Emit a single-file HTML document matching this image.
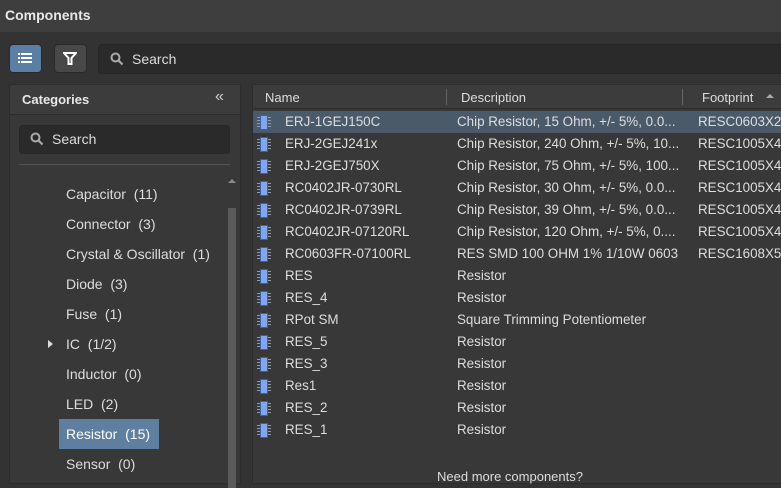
<!DOCTYPE html>
<html><head><style>
*{margin:0;padding:0;box-sizing:border-box}
body{width:781px;height:483px;overflow:hidden;background:#333;font-family:"Liberation Sans",sans-serif;color:#ddd;position:relative;font-size:13px}
.a{position:absolute}
.row{position:absolute;left:0;width:528px;height:22px;line-height:22px;white-space:nowrap}
.row span{position:absolute}
.ic{position:absolute;left:4px;top:4px;width:14px;height:15px}
.cat{position:absolute;left:66px;font-size:14px;color:#ddd;white-space:nowrap}
</style></head><body>
<div class="a" style="left:0;top:0;width:781px;height:32px;background:#3e3e3e"></div>
<div class="a" style="left:5px;top:7px;font-weight:bold;font-size:14px;color:#e8e8e8">Components</div>
<div class="a" style="left:9px;top:44px;width:33px;height:29px;background:#5b7ea5;border:1px solid #2a2a2a;border-radius:4px"></div>
<svg class="a" style="left:18px;top:52px" width="14" height="12"><g fill="#fff"><rect x="0" y="1" width="2" height="2"/><rect x="3" y="1" width="11" height="2"/><rect x="0" y="5" width="2" height="2"/><rect x="3" y="5" width="11" height="2"/><rect x="0" y="9" width="2" height="2"/><rect x="3" y="9" width="11" height="2"/></g></svg>
<div class="a" style="left:54px;top:44px;width:33px;height:29px;background:#484848;border:1px solid #2a2a2a;border-radius:4px"></div>
<svg class="a" style="left:63px;top:51px" width="14" height="15"><path d="M1 2h12l-4.5 5v6h-3v-6z" fill="none" stroke="#fff" stroke-width="2"/></svg>
<div class="a" style="left:98px;top:44px;width:690px;height:30px;background:#2a2a2a;border:1px solid #262626;border-radius:4px"></div>
<svg class="a" style="left:110px;top:52px" width="14" height="14"><circle cx="5.5" cy="5.5" r="4" fill="none" stroke="#aaa" stroke-width="2"/><path d="M8.5 8.5l4 4" stroke="#aaa" stroke-width="2.2"/></svg>
<div class="a" style="left:132px;top:51px;font-size:14px;color:#ddd">Search</div>

<div class="a" style="left:9px;top:84px;width:232px;height:400px;background:#383838;border:1px solid #2c2c2c"></div>
<div class="a" style="left:10px;top:85px;width:230px;height:30px;background:#3c3c3c;border-bottom:1px solid #2c2c2c"></div>
<div class="a" style="left:22px;top:92px;font-weight:bold;font-size:13px;color:#e8e8e8">Categories</div>
<div class="a" style="left:215px;top:88px;font-size:16px;color:#ccc">«</div>
<div class="a" style="left:19px;top:125px;width:211px;height:29px;background:#2a2a2a;border:1px solid #262626;border-radius:4px"></div>
<svg class="a" style="left:30px;top:132px" width="14" height="14"><circle cx="5.5" cy="5.5" r="4" fill="none" stroke="#aaa" stroke-width="2"/><path d="M8.5 8.5l4 4" stroke="#aaa" stroke-width="2.2"/></svg>
<div class="a" style="left:52px;top:131px;font-size:14px;color:#ddd">Search</div>
<div class="a" style="left:19px;top:164px;width:211px;height:1px;background:#555"></div>
<div class="a" style="left:228px;top:175px;width:0;height:0;border:4px solid transparent;border-bottom:4px solid #888"></div>
<div class="a" style="left:228px;top:208px;width:8px;height:280px;background:#5a5a5a"></div>
<div class="a" style="left:59px;top:419px;width:100px;height:30px;background:#5f7fa0"></div>
<div class="cat" style="top:186px">Capacitor &nbsp;(11)</div>
<div class="cat" style="top:216px">Connector &nbsp;(3)</div>
<div class="cat" style="top:246px">Crystal &amp; Oscillator &nbsp;(1)</div>
<div class="cat" style="top:276px">Diode &nbsp;(3)</div>
<div class="cat" style="top:306px">Fuse &nbsp;(1)</div>
<div class="a" style="left:48px;top:340px;width:0;height:0;border:4px solid transparent;border-left:5px solid #ddd"></div>
<div class="cat" style="top:336px">IC &nbsp;(1/2)</div>
<div class="cat" style="top:366px">Inductor &nbsp;(0)</div>
<div class="cat" style="top:396px">LED &nbsp;(2)</div>
<div class="cat" style="top:426px;color:#fff">Resistor &nbsp;(15)</div>
<div class="cat" style="top:456px">Sensor &nbsp;(0)</div>

<div class="a" style="left:252px;top:84px;width:530px;height:400px;background:#383838;border:1px solid #2c2c2c"></div>
<div class="a" style="left:253px;top:85px;width:528px;height:24px;background:#3c3c3c;border-bottom:1px solid #2c2c2c"></div>
<div class="a" style="left:265px;top:90px;color:#ddd">Name</div>
<div class="a" style="left:446px;top:89px;width:1px;height:16px;background:#666"></div>
<div class="a" style="left:461px;top:90px;color:#ddd">Description</div>
<div class="a" style="left:682px;top:89px;width:1px;height:16px;background:#666"></div>
<div class="a" style="left:702px;top:90px;color:#ddd">Footprint</div>
<div class="a" style="left:766px;top:94px;width:0;height:0;border:4px solid transparent;border-bottom:4px solid #aaa;border-top:0"></div>
<div class="a" style="left:253px;top:111px;width:528px;height:350px;font-size:13.4px" id="t"></div>
<script>
var d=[["ERJ-1GEJ150C","Chip Resistor, 15 Ohm, +/- 5%, 0.0...","RESC0603X2"],["ERJ-2GEJ241x","Chip Resistor, 240 Ohm, +/- 5%, 10...","RESC1005X4"],["ERJ-2GEJ750X","Chip Resistor, 75 Ohm, +/- 5%, 100...","RESC1005X4"],["RC0402JR-0730RL","Chip Resistor, 30 Ohm, +/- 5%, 0.0...","RESC1005X4"],["RC0402JR-0739RL","Chip Resistor, 39 Ohm, +/- 5%, 0.0...","RESC1005X4"],["RC0402JR-07120RL","Chip Resistor, 120 Ohm, +/- 5%, 0....","RESC1005X4"],["RC0603FR-07100RL","RES SMD 100 OHM 1% 1/10W 0603","RESC1608X5"],["RES","Resistor",""],["RES_4","Resistor",""],["RPot SM","Square Trimming Potentiometer",""],["RES_5","Resistor",""],["RES_3","Resistor",""],["Res1","Resistor",""],["RES_2","Resistor",""],["RES_1","Resistor",""]];
var h="";d.forEach(function(r,i){h+='<div class="row" style="top:'+(i*22)+'px'+(i==0?';background:#4b5a6b':'')+'"><svg class="ic" viewBox="0 0 14 15"><g fill="#999"><rect x="0" y="2" width="3" height="1"/><rect x="0" y="5" width="3" height="1"/><rect x="0" y="8" width="3" height="1"/><rect x="0" y="11" width="3" height="1"/><rect x="11" y="2" width="3" height="1"/><rect x="11" y="5" width="3" height="1"/><rect x="11" y="8" width="3" height="1"/><rect x="11" y="11" width="3" height="1"/></g><rect x="3.5" y="0.5" width="7" height="14" fill="#7fa6ee" stroke="#3d5fa8"/></svg><span style="left:32px">'+r[0]+'</span><span style="left:204px">'+r[1]+'</span><span style="left:445px">'+r[2]+'</span></div>'});
document.getElementById("t").innerHTML=h;
</script>
<div class="a" style="left:437px;top:469px;color:#ddd">Need more components?</div>
</body></html>
